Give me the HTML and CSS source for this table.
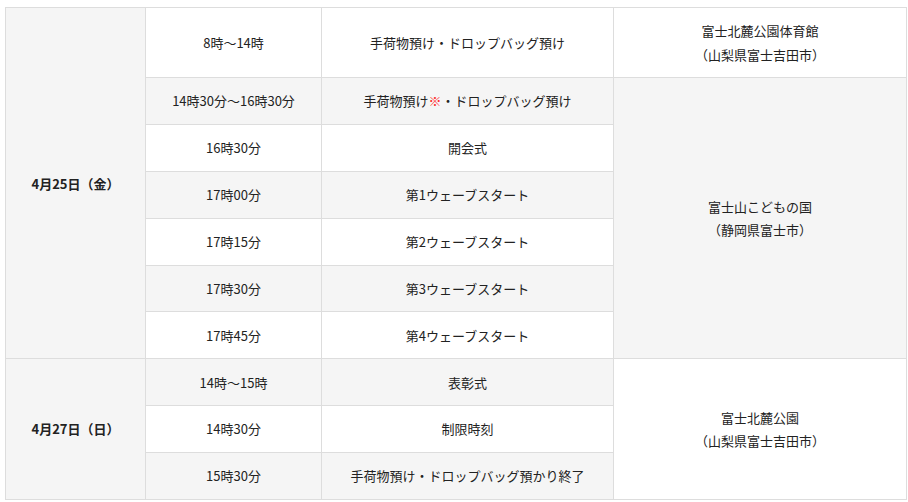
FILE: index.html
```html
<!DOCTYPE html>
<html lang="ja">
<head>
<meta charset="utf-8">
<link rel="stylesheet" href="styles.css">
</head>
<body>
<table class="schedule">
  <colgroup>
    <col class="c-date">
    <col class="c-time">
    <col class="c-event">
    <col class="c-place">
  </colgroup>
  <tbody>
    <tr>
      <th class="date" rowspan="7">4月25日（金）</th>
      <td>8時～14時</td>
      <td>手荷物預け・ドロップバッグ預け</td>
      <td class="place white">富士北麓公園体育館<br>（山梨県富士吉田市）</td>
    </tr>
    <tr>
      <td>14時30分～16時30分</td>
      <td>手荷物預け<span class="mark">※</span>・ドロップバッグ預け</td>
      <td class="place grey" rowspan="6">富士山こどもの国<br>（静岡県富士市）</td>
    </tr>
    <tr>
      <td>16時30分</td>
      <td>開会式</td>
    </tr>
    <tr>
      <td>17時00分</td>
      <td>第1ウェーブスタート</td>
    </tr>
    <tr>
      <td>17時15分</td>
      <td>第2ウェーブスタート</td>
    </tr>
    <tr>
      <td>17時30分</td>
      <td>第3ウェーブスタート</td>
    </tr>
    <tr>
      <td>17時45分</td>
      <td>第4ウェーブスタート</td>
    </tr>
    <tr>
      <th class="date" rowspan="3">4月27日（日）</th>
      <td>14時～15時</td>
      <td>表彰式</td>
      <td class="place white" rowspan="3">富士北麓公園<br>（山梨県富士吉田市）</td>
    </tr>
    <tr>
      <td>14時30分</td>
      <td>制限時刻</td>
    </tr>
    <tr>
      <td>15時30分</td>
      <td>手荷物預け・ドロップバッグ預かり終了</td>
    </tr>
  </tbody>
</table>
</body>
</html>
```

FILE: styles.css
```css
html, body {
  margin: 0;
  padding: 0;
  background: #ffffff;
}

body {
  font-family: "Noto Sans CJK JP", "Noto Sans", sans-serif;
  font-size: 13px;
  color: #222222;
}

.schedule {
  margin: 7px 0 0 5px;
  width: 901px;
  border-collapse: collapse;
  table-layout: fixed;
}

.c-date { width: 140px; }
.c-time { width: 176px; }
.c-event { width: 292px; }
.c-place { width: 293px; }

.schedule th,
.schedule td {
  border: 1px solid #dddddd;
  padding: 11.33px 8px;
  line-height: 23.2px;
  text-align: center;
  vertical-align: middle;
  font-weight: normal;
  background: #ffffff;
}

.schedule tr:nth-child(even) td {
  background: #f5f5f5;
}

.schedule th.date {
  background: #f5f5f5;
  font-weight: bold;
}

.schedule td.place.white {
  background: #ffffff;
}

.schedule td.place.grey {
  background: #f5f5f5;
}

.mark {
  color: #ff2a2a;
}
```
